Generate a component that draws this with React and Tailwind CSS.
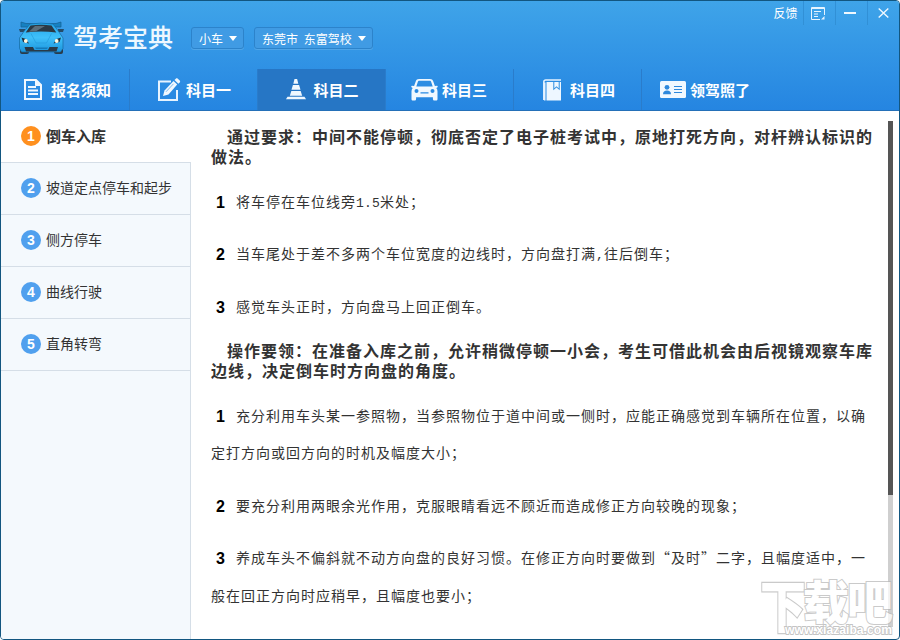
import { useState } from "react";
import { clsx } from "clsx";

const DocIcon = () => (
  <svg width="18" height="21" viewBox="0 0 18 21" fill="none">
    <path d="M1 1h11l5 5v14H1z" stroke="#f0f8ff" strokeWidth="2" />
    <path d="M11.5 1v5.5H17" fill="#f0f8ff" stroke="#f0f8ff" />
    <path d="M4 8h8M4 11.500h10M4 15h10" stroke="#f0f8ff" strokeWidth="1.800" />
  </svg>
);

const EditIcon = () => (
  <svg width="23" height="23" viewBox="0 0 23 23" fill="none">
    <path d="M13 3.500H1V22h18V12" stroke="#e6f3ff" strokeWidth="2" />
    <path d="M5 18l1.500-5.500L15.500 3l3.700 3.600L10.500 16.500z" fill="#f0f8ff" />
    <path d="M16.500 2l1.300-1.300c.6-.6 1.400-.6 2 0l1.900 1.900c.6.6.6 1.400 0 2L20.400 5.800z" fill="#f0f8ff" />
    <path d="M8 13.800l7.500-8" stroke="#2d8de0" strokeWidth="0.6" />
  </svg>
);

const ConeIcon = () => (
  <svg width="20" height="21" viewBox="0 0 20 21" fill="#f0f8ff">
    <path d="M8.500 0h2.600l1.200 4.700H7.300z" />
    <path d="M6.900 6h6.200l1.400 4.800h-9z" />
    <path d="M5.300 12h9.400l1.500 4.800H3.800z" />
    <path d="M1.500 17.800h17l1.500 2.400H0z" />
  </svg>
);

const CarIcon = () => (
  <svg width="27" height="22" viewBox="0 0 27 22" fill="#f0f8ff">
    <path
      fillRule="evenodd"
      d="M8 0h11c1.600 0 2.700.8 3.200 2.300L23.900 7l2.100-.2c.9 0 1 1.400.2 1.800l-.9.400c.8.900 1.200 2 1.200 3.400V20c0 1-.6 1.500-1.500 1.500h-1.700c-.9 0-1.400-.6-1.400-1.500v-1.700H5.100V20c0 .9-.5 1.500-1.400 1.500H2c-.9 0-1.500-.5-1.500-1.500v-7.600c0-1.400.4-2.500 1.200-3.400l-.9-.4C0 8.200.1 6.800 1 6.800l2.100.2 1.700-4.700C5.300.8 6.400 0 8 0zM8.200 1.800c-.7 0-1 .3-1.300 1L5.300 7.500h16.400l-1.600-4.700c-.3-.7-.6-1-1.300-1zM5.500 10a2 2 0 100 4 2 2 0 000-4zM21.500 10a2 2 0 100 4 2 2 0 000-4zM9.500 13.200h8v1.300h-8z"
    />
  </svg>
);

const BookIcon = () => (
  <svg width="18" height="22" viewBox="0 0 18 22" fill="none">
    <path d="M.8 21V3c0-1.300.7-2 2-2H18" stroke="#e6f3ff" strokeWidth="1.500" />
    <path d="M1 21.500V3.500h1.500v18z" fill="#e6f3ff" />
    <path d="M3.500 3H18v18.500H3.500z" fill="#eef7ff" />
    <path d="M10.300 3h1v6.200l2.200-1.900 2.200 1.900V3h1v8.200l-3.200-2.700-3.200 2.700z" fill="#2d8de0" />
  </svg>
);

const CardIcon = () => (
  <svg width="26" height="17" viewBox="0 0 26 17">
    <rect width="26" height="17" rx="1.500" fill="#f0f8ff" />
    <circle cx="7" cy="6.300" r="2.400" fill="#2d88dc" />
    <path d="M3 13.200c0-2.500 1.500-3.700 4-3.700s4 1.200 4 3.700z" fill="#2d88dc" />
    <path d="M14 5.500h8M14 8.500h8M14 11.500h8" stroke="#2d88dc" strokeWidth="1.200" />
  </svg>
);

const CarLogo = () => (
  <svg width="48" height="34" viewBox="0 0 48 34">
    <defs>
      <linearGradient id="paint" x1="0" y1="0" x2="0" y2="1">
        <stop offset="0" stopColor="#22a4e8" />
        <stop offset="0.5" stopColor="#3fc0fa" />
        <stop offset="1" stopColor="#1a94dc" />
      </linearGradient>
    </defs>
    <rect x="3" y="22" width="9" height="11" rx="2" fill="#2a3b49" />
    <rect x="37" y="22" width="9" height="11" rx="2" fill="#2a3b49" />
    <path d="M4 1l5 1.500h30L44 1v5H4z" fill="#1681c2" stroke="#155f90" strokeWidth="0.7" />
    <path d="M2 8h6v3H3zM47 8h-6v3h5z" fill="#254c69" />
    <path
      d="M13 3Q24 1.200 36 3l6 8 4 6v10.500L43.500 31h-39L2.500 27.500V17l4-6z"
      fill="url(#paint)"
      stroke="#1569a0"
      strokeWidth="0.7"
    />
    <path d="M13.500 4.500q10.500-1.500 21 0l4.800 7q-15.300-2-30.600 0z" fill="#2b3945" />
    <path d="M18 5h10l-9 5.200-7 .5z" fill="#5b6d7a" />
    <path d="M14 12.500l5 9.500h10.500l5-9.500" fill="none" stroke="#2299da" strokeWidth="0.6" />
    <path d="M4.500 16.500l4.500 1.500 3 4.500-6-1.500z" fill="#1c3345" />
    <path d="M44 16.500l-4.500 1.500-3 4.500 6-1.500z" fill="#1c3345" />
    <circle cx="8.800" cy="20" r="1.900" fill="#fff8e0" />
    <circle cx="39.700" cy="20" r="1.900" fill="#fff8e0" />
    <path d="M7.500 26h8.500l1.500 3h13.500l1.500-3H41l-1.500 4.500H9z" fill="#2a3a48" />
    <path d="M18 26.500h13l-1 1.500H19z" fill="#1479b8" />
  </svg>
);

const tabs = [
  { label: "报名须知", icon: <DocIcon />, box: "w-[129px] gap-[9px] pl-[5px]" },
  { label: "科目一", icon: <EditIcon />, box: "w-[128px] gap-[5px] pl-[2px]" },
  { label: "科目二", icon: <ConeIcon />, box: "w-[128px] gap-[7px] pl-[2px]" },
  { label: "科目三", icon: <CarIcon />, box: "w-[128px] gap-[4px] pr-[1px]" },
  { label: "科目四", icon: <BookIcon />, box: "w-[128px] gap-[9px] pl-[3px]" },
  { label: "领驾照了", icon: <CardIcon />, box: "w-[128px] gap-[4px] pr-[2px]" },
];

const lessons = ["倒车入库", "坡道定点停车和起步", "侧方停车", "曲线行驶", "直角转弯"];

// half-width characters take half of a Chinese character's cell
const Half = ({ children }) => (
  <span className="font-['Liberation_Mono'] text-[13px] leading-none tracking-[0.2px]">{children}</span>
);

const sections = [
  {
    title: [
      "通过要求：中间不能停顿，彻底否定了电子桩考试中，原地打死方向，对杆辨认标识的",
      "做法。",
    ],
    items: [
      [
        <>
          将车停在车位线旁<Half>1.5</Half>米处；
        </>,
      ],
      [
        <>
          当车尾处于差不多两个车位宽度的边线时，方向盘打满<Half>,</Half>往后倒车；
        </>,
      ],
      ["感觉车头正时，方向盘马上回正倒车。"],
    ],
  },
  {
    title: [
      "操作要领：在准备入库之前，允许稍微停顿一小会，考生可借此机会由后视镜观察车库",
      "边线，决定倒车时方向盘的角度。",
    ],
    items: [
      [
        "充分利用车头某一参照物，当参照物位于道中间或一侧时，应能正确感觉到车辆所在位置，以确",
        "定打方向或回方向的时机及幅度大小；",
      ],
      ["要充分利用两眼余光作用，克服眼睛看远不顾近而造成修正方向较晚的现象；"],
      [
        "养成车头不偏斜就不动方向盘的良好习惯。在修正方向时要做到“及时”二字，且幅度适中，一",
        "般在回正方向时应稍早，且幅度也要小；",
      ],
    ],
  },
];

const Dropdown = ({ children, className }) => (
  <button
    className={clsx(
      "flex h-[22px] items-center justify-between rounded-[3px] border border-[#2c83cb] bg-[#409be4] pr-[6px] pl-[7px] text-[12px] text-white shadow-[0_1px_0_#4fa5e8]",
      className
    )}
  >
    <span className="pt-px [word-spacing:3px]">{children}</span>
    <svg width="8" height="5" viewBox="0 0 8 5" fill="#fff">
      <path d="M0 0h8L4 5z" />
    </svg>
  </button>
);

const WindowControls = () => (
  <div className="flex h-6 text-white">
    <button className="w-[34px] pr-px text-[12px] leading-6">反馈</button>
    <button className="flex w-8 items-center justify-center border-l border-[#3190d6] pr-[3px]">
      <svg width="14" height="13" viewBox="0 0 14 13" fill="none" stroke="#e6f4ff">
        <path d="M13.500 8V.5H.5v12H9" />
        <path d="M.5 1.500h13" />
        <path d="M3 4.500h7M3 7h4M3 9.500h4" strokeWidth="1.200" />
        <path d="M10 12.500h3.500V9z" fill="#e6f4ff" stroke="none" />
      </svg>
    </button>
    <button className="flex w-8 items-center justify-center border-l border-[#3190d6] pr-[3px]">
      <span className="h-[2px] w-3 bg-[#f0f8ff]" />
    </button>
    <button className="flex w-8 items-center justify-center border-l border-[#3190d6]">
      <svg width="11" height="10" viewBox="0 0 11 10" stroke="#f0f8ff" strokeWidth="1.400">
        <path d="M.7.5l9.600 9M10.300.5L.7 9.500" />
      </svg>
    </button>
  </div>
);

const Header = ({ tab, onTab }) => (
  <header className="flex h-[110px] shrink-0 flex-col border-b border-[#2470b8] bg-linear-to-b from-[#3fa4e9] to-[#2585e1]">
    <div className="flex h-[68px] justify-between">
      <div className="flex pl-4">
        <div className="pt-[20px]">
          <CarLogo />
        </div>
        <h1 className="ml-2 pt-[17px] text-[25px] leading-9 font-medium text-[#eef8ff]">驾考宝典</h1>
        <div className="ml-[18px] flex gap-[10px] pt-[26px]">
          <Dropdown className="w-[53px]">小车</Dropdown>
          <Dropdown className="w-[119px]">东莞市 东富驾校</Dropdown>
        </div>
      </div>
      <WindowControls />
    </div>
    <nav className="flex h-[41px]">
      {tabs.map((item, index) => (
        <button
          key={item.label}
          onClick={() => onTab(index)}
          className={clsx(
            "flex items-center justify-center text-[15px] font-bold text-white",
            item.box,
            index < 5 && "border-r border-[#2a7ccb]",
            index === tab && "bg-[#2676c5]"
          )}
        >
          {item.icon}
          <span className="leading-5">{item.label}</span>
        </button>
      ))}
    </nav>
  </header>
);

const Sidebar = ({ lesson, onLesson }) => (
  <aside className="flex w-[190px] shrink-0 flex-col bg-[#f4f9fd]">
    {lessons.map((name, index) => (
      <button
        key={name}
        onClick={() => onLesson(index)}
        className={clsx(
          "flex h-[52px] shrink-0 items-center gap-[5px] border-b border-[#d5dee7] pb-px pl-5 text-[#333]",
          index === lesson ? "bg-white text-[15px] font-bold" : "border-r text-[14px]"
        )}
      >
        <span
          className={clsx(
            "flex size-5 items-center justify-center rounded-full font-['Liberation_Sans'] text-[14px] leading-none font-bold text-white",
            index === lesson ? "bg-[#ff901f]" : "bg-[#50a0ee]"
          )}
        >
          {index + 1}
        </span>
        <span className={clsx(index !== lesson && "pb-px")}>{name}</span>
      </button>
    ))}
    <div className="flex-1 border-r border-[#d5dee7]" />
  </aside>
);

const Article = () => (
  <main className="flex-1 pt-[15px] pl-5 tracking-[1px] whitespace-nowrap text-[#333]">
    {sections.map((section) => (
      <section key={section.title[0]} className="mb-[15px]">
        <h2 className="mb-[16.5px] text-[16px] leading-5 font-bold">
          <span className="block pl-4">{section.title[0]}</span>
          <span className="block">{section.title[1]}</span>
        </h2>
        <ol className="flex flex-col gap-[15px] text-[14px] leading-[37.5px]">
          {section.items.map((lines, index) => (
            <li key={index}>
              <div className="flex h-[37.5px]">
                <b className="w-[25px] pt-px pl-[5px] font-['Liberation_Sans'] text-[16px] text-black">
                  {index + 1}
                </b>
                <span>{lines[0]}</span>
              </div>
              {lines[1] && <div>{lines[1]}</div>}
            </li>
          ))}
        </ol>
      </section>
    ))}
  </main>
);

const Watermark = () => (
  <svg
    width="134"
    height="62"
    viewBox="0 0 134 62"
    className="pointer-events-none absolute right-[5px] bottom-0 overflow-visible opacity-75"
  >
    <g
      fontFamily="'Noto Sans CJK SC', sans-serif"
      fontSize="46"
      fontWeight="900"
      fill="#fff"
      stroke="#b8b8b8"
      strokeWidth="2"
      paintOrder="stroke"
    >
      <text x="0" y="42" transform="translate(0 -1.500) scale(1 1.220)">
        下
      </text>
      <text x="43" y="42" textLength="90">
        载吧
      </text>
    </g>
    <text
      x="25"
      y="57"
      textLength="107"
      lengthAdjust="spacingAndGlyphs"
      fontFamily="'Liberation Sans', sans-serif"
      fontSize="13"
      fontWeight="700"
      fill="#fff"
      stroke="#b0b0b0"
      strokeWidth="1.800"
      paintOrder="stroke"
    >
      www.xiazaiba.com
    </text>
  </svg>
);

export default function App() {
  const [tab, setTab] = useState(2);
  const [lesson, setLesson] = useState(0);

  return (
    <div
      lang="zh-CN"
      className="relative flex h-[640px] w-[900px] flex-col overflow-hidden rounded-[4px] border border-[#125680] bg-white font-['Noto_Sans_CJK_SC',sans-serif]"
    >
      <Header tab={tab} onTab={setTab} />
      <div className="flex min-h-0 flex-1">
        <Sidebar lesson={lesson} onLesson={setLesson} />
        <Article />
        <div className="mt-[10px] mr-[6px] h-[506px] w-[5px] bg-[#cfcfcf]">
          <div className="h-[374px] bg-[#555]" />
        </div>
      </div>
      <Watermark />
    </div>
  );
}
